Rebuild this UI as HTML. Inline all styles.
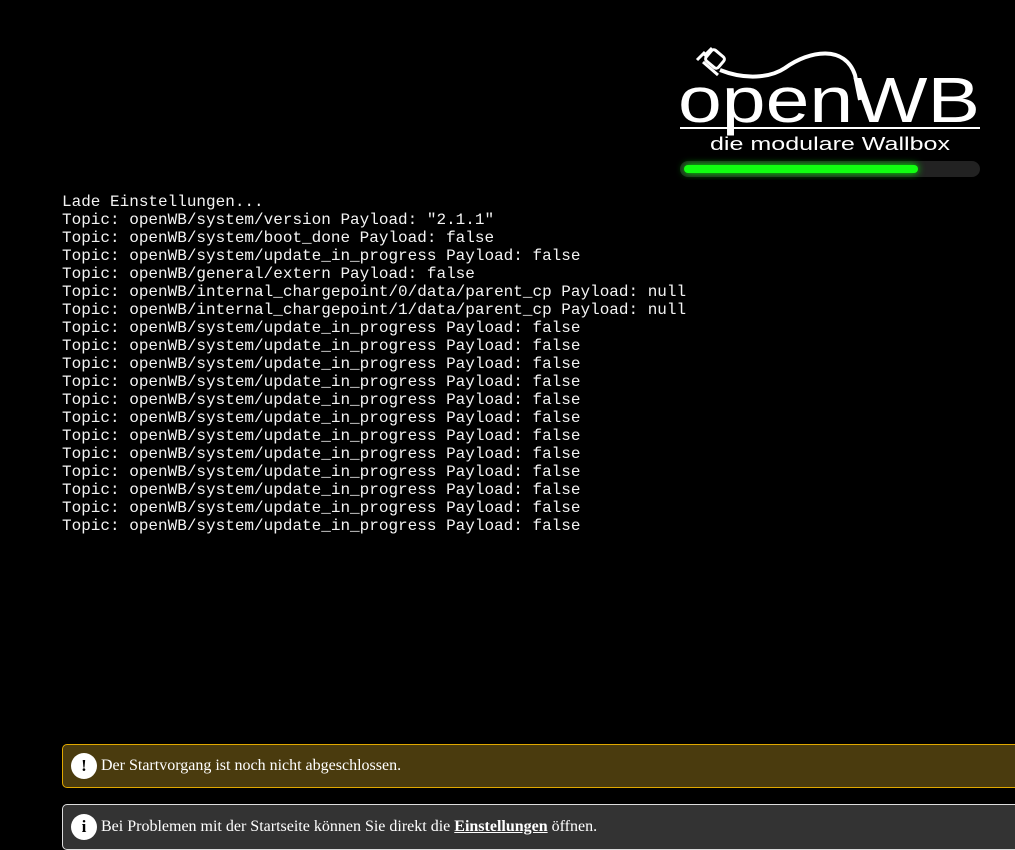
<!DOCTYPE html>
<html><head><meta charset="utf-8"><style>
body{margin:0;background:#000;width:1015px;height:847px;overflow:hidden;position:relative;font-family:"Liberation Serif",serif;}
#log{position:absolute;left:62px;top:193px;font-family:"Liberation Mono",monospace;font-size:16px;line-height:18px;color:#f4f4f4;white-space:pre;margin:0}
.logo{position:absolute;left:676px;top:40px;width:310px;height:140px}
.alert{position:absolute;left:62px;right:-5px;border-radius:5px;color:#fff;font-size:16px;display:flex;align-items:center;box-sizing:border-box}
.ic{width:26px;height:26px;border-radius:50%;background:#fff;color:#000;font-weight:bold;font-size:17px;display:flex;align-items:center;justify-content:center;margin:0 4px 0 8px}
</style></head><body>
<svg class="logo" viewBox="676 40 310 140">
<path d="M703 62 L718 75 M697 60 l8-8 M704 56 l8-8" stroke="#fff" stroke-width="3" fill="none"/>
<rect x="707" y="52" width="16" height="14" rx="3" transform="rotate(40 715 59)" fill="none" stroke="#fff" stroke-width="3"/>
<path d="M720 70 C745 80 770 78 785 68 C810 50 845 45 855 75 L860 100" stroke="#fff" stroke-width="4" fill="none"/>
<text x="678" y="122" fill="#fff" font-family="Liberation Sans,sans-serif" font-size="64" textLength="302" lengthAdjust="spacingAndGlyphs">openWB</text>
<rect x="680" y="127" width="300" height="2" fill="#fff"/>
<text x="830" y="150" fill="#fff" font-family="Liberation Sans,sans-serif" font-size="18" text-anchor="middle" textLength="240" lengthAdjust="spacingAndGlyphs">die modulare Wallbox</text>
<rect x="680" y="161" width="300" height="16" rx="8" fill="#222"/>
<rect x="684" y="165" width="234" height="8" rx="4" fill="#1f1" style="filter:drop-shadow(0 0 4px #0f0)"/>
</svg>
<pre id="log">Lade Einstellungen...
Topic: openWB/system/version Payload: "2.1.1"
Topic: openWB/system/boot_done Payload: false
Topic: openWB/system/update_in_progress Payload: false
Topic: openWB/general/extern Payload: false
Topic: openWB/internal_chargepoint/0/data/parent_cp Payload: null
Topic: openWB/internal_chargepoint/1/data/parent_cp Payload: null
Topic: openWB/system/update_in_progress Payload: false
Topic: openWB/system/update_in_progress Payload: false
Topic: openWB/system/update_in_progress Payload: false
Topic: openWB/system/update_in_progress Payload: false
Topic: openWB/system/update_in_progress Payload: false
Topic: openWB/system/update_in_progress Payload: false
Topic: openWB/system/update_in_progress Payload: false
Topic: openWB/system/update_in_progress Payload: false
Topic: openWB/system/update_in_progress Payload: false
Topic: openWB/system/update_in_progress Payload: false
Topic: openWB/system/update_in_progress Payload: false
Topic: openWB/system/update_in_progress Payload: false</pre>
<div class="alert" style="top:744px;height:44px;background:#4a3b0e;border:1px solid #e0a800"><span class="ic">!</span>Der Startvorgang ist noch nicht abgeschlossen.</div>
<div class="alert" style="top:804px;height:46px;background:#333;border:1px solid #ddd"><span class="ic">i</span>Bei Problemen mit der Startseite können Sie direkt die&nbsp;<b style="text-decoration:underline">Einstellungen</b>&nbsp;öffnen.</div>
</body></html>
